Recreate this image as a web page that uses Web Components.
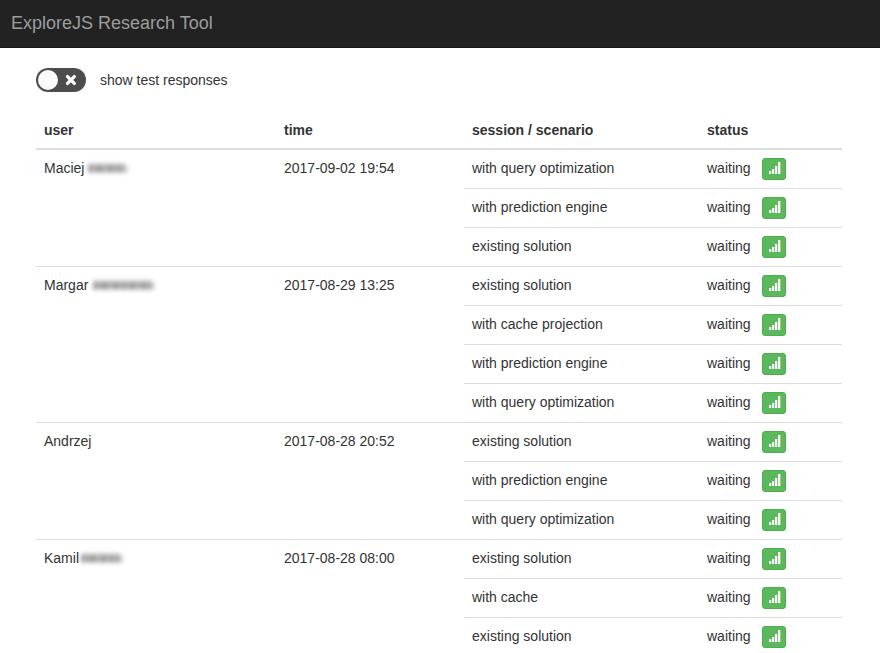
<!DOCTYPE html>
<html lang="en">
<head>
<meta charset="utf-8">
<title>ExploreJS Research Tool</title>
<style>
body { margin: 0; background: #fff; color: #333; font: 14px/20px "Liberation Sans", Arial, sans-serif; height: 653px; overflow: hidden; }
</style>
</head>
<body>
<research-app></research-app>
<script>
const define = (name, html, setup) => customElements.define(name, class extends HTMLElement {
  connectedCallback() {
    if (this.shadowRoot) return;
    const t = document.createElement('template');
    t.innerHTML = html;
    this.attachShadow({ mode: 'open' }).append(t.content.cloneNode(true));
    if (setup) setup(this, this.shadowRoot);
  }
});

define('nav-bar', `<style>
:host { display: flex; box-sizing: border-box; height: 48px; padding: 13px 11px 0; background: #222; border-bottom: 1px solid #1a1a1a; color: #9d9d9d; font-size: 18px; line-height: 20px; }
</style><slot></slot>`);

define('toggle-switch', `<style>
:host { display: flex; align-items: center; gap: 14px; height: 24px; }
svg { display: block; }
</style>
<svg width="50" height="24" viewBox="0 0 50 24">
<rect width="50" height="24" rx="12" fill="#4d4d4d"/>
<circle cx="12" cy="12" r="10" fill="#fafafa"/>
<path d="M31.5 8.6 L38.3 15.4 M38.3 8.6 L31.5 15.4" stroke="#fafafa" stroke-width="3.3" stroke-linecap="round"/>
</svg><span><slot></slot></span>`);

define('signal-button', `<style>
:host { display: flex; align-items: center; justify-content: center; box-sizing: border-box; width: 24px; height: 22px; background: #5cb85c; border: 1px solid #4cae4c; border-radius: 3px; }
svg { display: block; margin: -2px 0 0 2px; }
</style>
<svg width="12" height="12" viewBox="0 0 12 12" shape-rendering="crispEdges">
<path fill="#fff" d="M0 9h2v3H0zM3 7h2v5H3zM6 4h2v8H6zM9 0h2v12H9z"/>
<path fill="#7ac68a" d="M2 9h1v3H2zM5 7h1v5H5zM8 4h1v8H8z"/>
<path fill="#a5cc66" d="M11 0h1v12h-1z"/></svg>`);

/* An obscured surname: uneven soft grey strokes in place of its text. */
define('redacted-name', `<style>
:host { display: block; height: 20px; }
svg { display: block; overflow: visible; }
</style><svg height="20" fill="none" stroke="#444"></svg>`, (el, root) => {
  const w = +el.getAttribute('width');
  const svg = root.querySelector('svg');
  svg.setAttribute('width', w);
  svg.innerHTML = `<defs><filter id="soft" filterUnits="userSpaceOnUse" x="-8" y="-4" width="${w + 16}" height="28" color-interpolation-filters="sRGB"><feGaussianBlur stdDeviation="1.9"/></filter></defs>
<g filter="url(#soft)">
<path d="M2 10H${w - 5}" stroke-width="9" stroke-opacity=".34"/>
<path d="M2 11H${w - 5}" stroke-width="7" stroke-opacity=".25" stroke-dasharray="5 2 9 3 7 2"/>
<path d="M${w - 6} 11h5" stroke-width="7" stroke-opacity=".14"/></g>`;
});

define('session-row', `<style>
:host { display: grid; grid-template-columns: 235px 143px; height: 38px; border-top: 1px solid #ddd; }
div { display: flex; padding: 8px; }
.state { width: 43px; white-space: nowrap; }
signal-button { margin-left: 12px; }
</style>
<div><slot></slot></div><div><span class="state">waiting</span><signal-button></signal-button></div>`);

define('user-group', `<style>
:host { display: grid; grid-template-columns: 240px 188px 378px; border-top: 1px solid #ddd; }
:host([first]) { border-top: 0; }
.cell { display: flex; padding: 8px; }
::slotted(session-row:first-child) { border-top: 0; }
</style>
<div class="cell"><span class="name"></span></div><div class="cell time"></div><div><slot></slot></div>`, (el, root) => {
  root.querySelector('.name').textContent = el.getAttribute('name');
  root.querySelector('.time').textContent = el.getAttribute('time');
  const width = el.getAttribute('redacted');
  if (width) {
    const r = document.createElement('redacted-name');
    r.setAttribute('width', width);
    r.style.marginLeft = el.getAttribute('gap') + 'px';
    root.querySelector('.cell').append(r);
  }
});

define('table-head', `<style>
:host { display: grid; grid-template-columns: 240px 188px 235px 143px; height: 36px; border-bottom: 2px solid #ddd; font-weight: bold; }
span { padding: 8px; }
</style><span>user</span><span>time</span><span>session / scenario</span><span>status</span>`);

define('research-app', `<style>
:host { display: block; }
main { width: 806px; padding: 20px 0 0 36px; }
section { margin-top: 20px; }
</style>
<nav-bar>ExploreJS Research Tool</nav-bar>
<main>
<toggle-switch>show test responses</toggle-switch>
<section>
<table-head></table-head>
<user-group first name="Maciej" time="2017-09-02 19:54" redacted="44" gap="2">
<session-row>with query optimization</session-row><session-row>with prediction engine</session-row><session-row>existing solution</session-row>
</user-group>
<user-group name="Margar" time="2017-08-29 13:25" redacted="66" gap="3">
<session-row>existing solution</session-row><session-row>with cache projection</session-row><session-row>with prediction engine</session-row><session-row>with query optimization</session-row>
</user-group>
<user-group name="Andrzej" time="2017-08-28 20:52">
<session-row>existing solution</session-row><session-row>with prediction engine</session-row><session-row>with query optimization</session-row>
</user-group>
<user-group name="Kamil" time="2017-08-28 08:00" redacted="46" gap="0">
<session-row>existing solution</session-row><session-row>with cache</session-row><session-row>existing solution</session-row>
</user-group>
</section>
</main>`);
</script>
</body>
</html>
